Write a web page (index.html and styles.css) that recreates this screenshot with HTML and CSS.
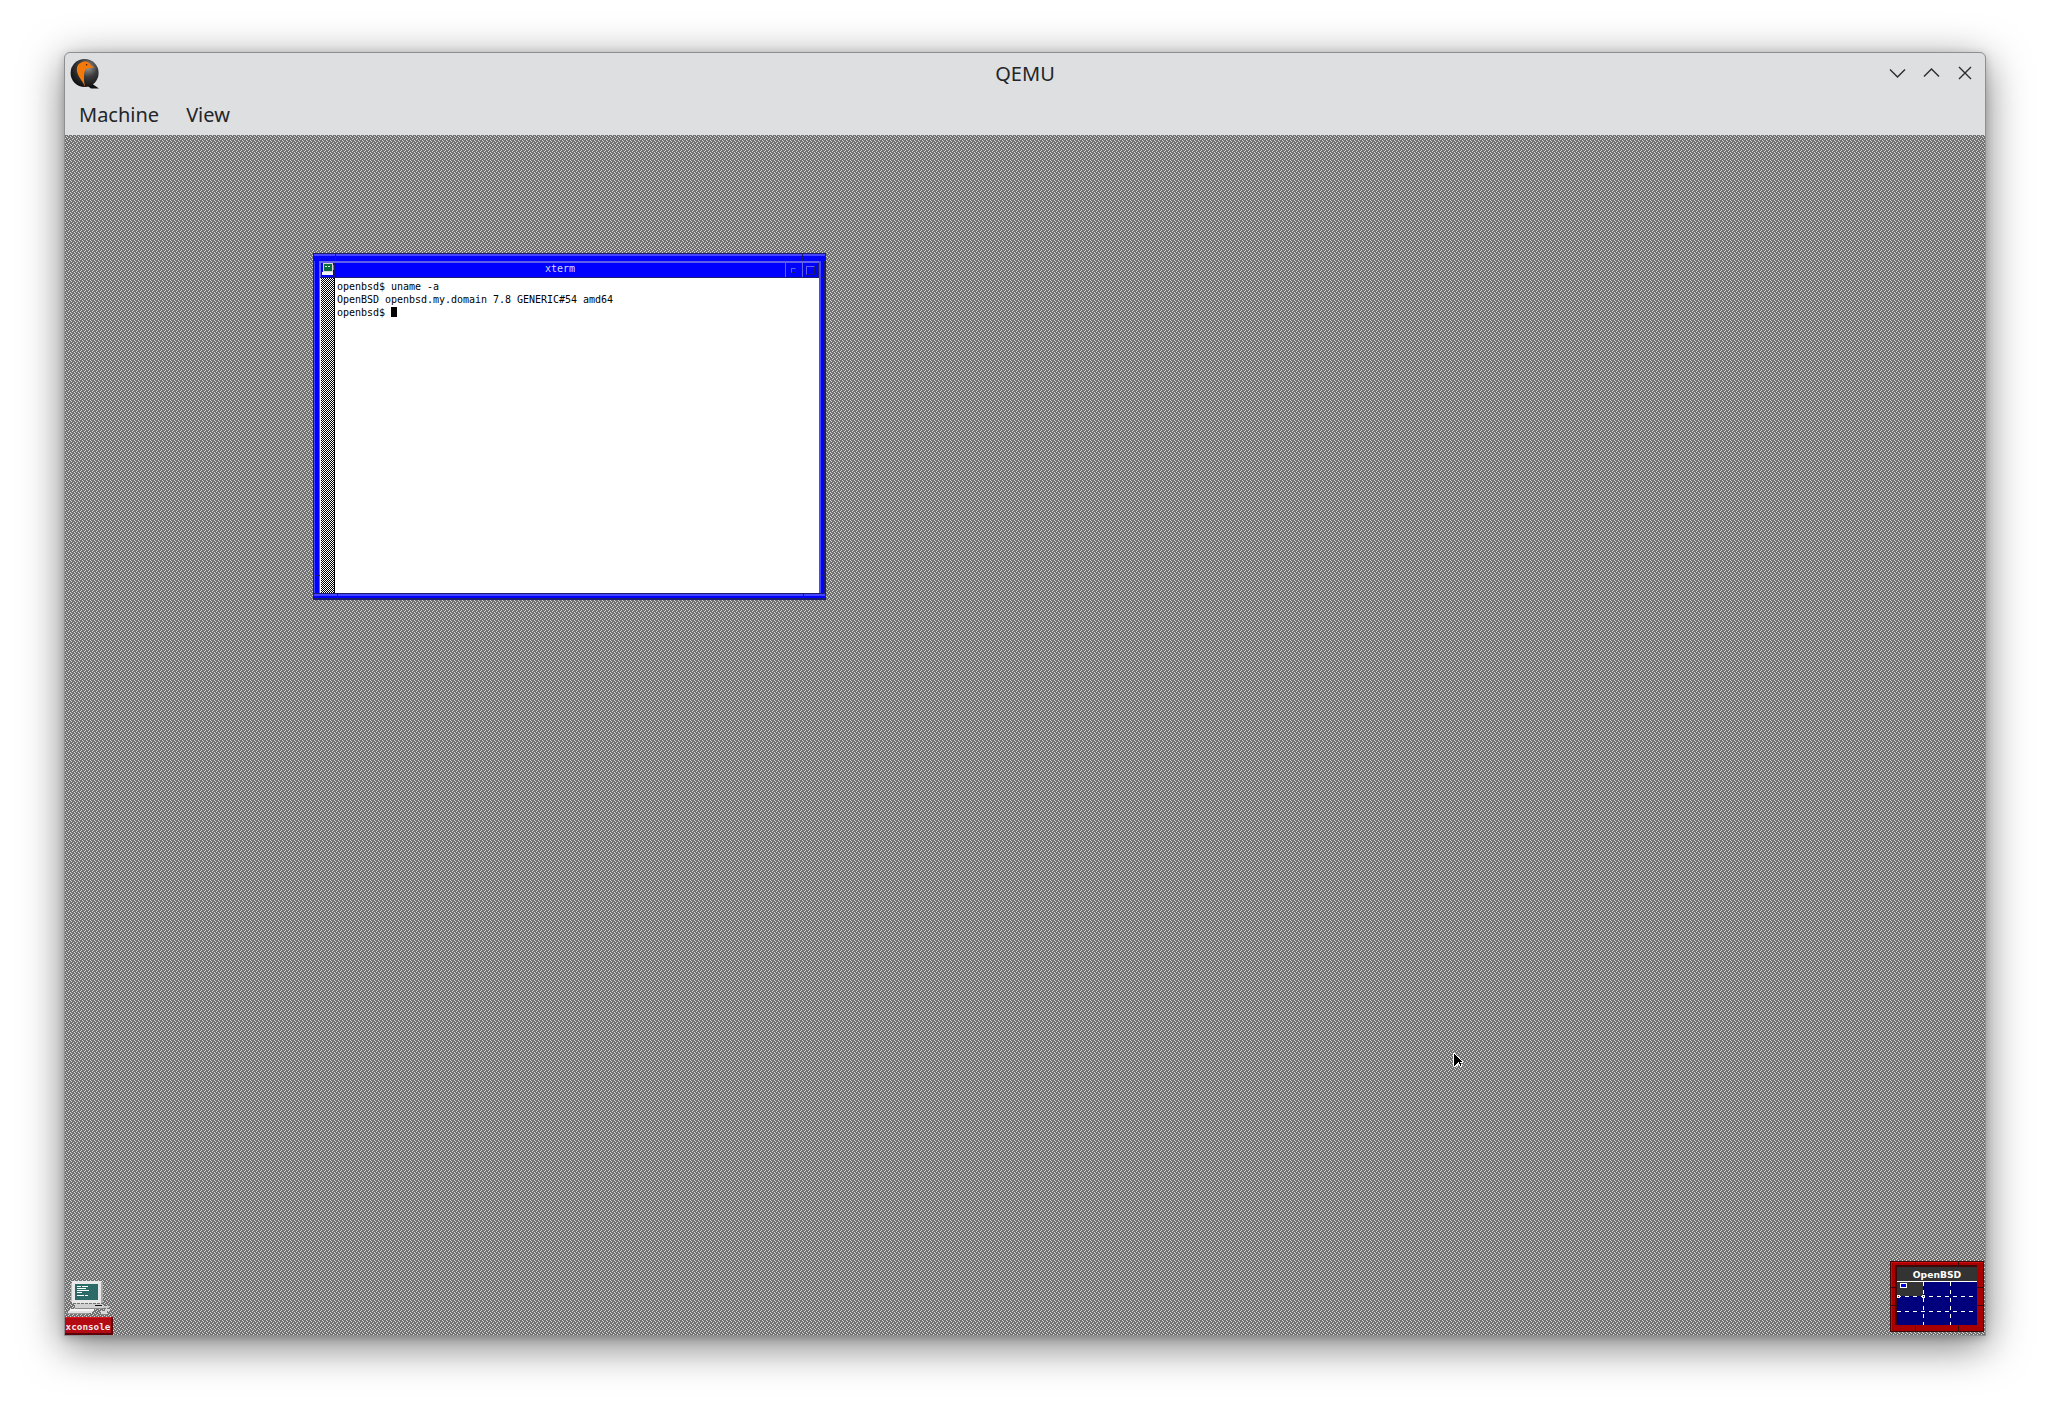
FILE: index.html
```html
<!DOCTYPE html>
<html lang="en">
<head>
<meta charset="utf-8">
<title>QEMU</title>
<link rel="stylesheet" href="styles.css">
</head>
<body>
<div class="host">
  <header class="titlebar">
    <div class="titlebar-left">
      <svg class="qemu-logo" width="30" height="31" viewBox="0 0 30 31">
        <defs>
          <radialGradient id="ball" cx="0.62" cy="0.3" r="0.75">
            <stop offset="0" stop-color="#9a9a9a"/>
            <stop offset="0.45" stop-color="#3c3c3c"/>
            <stop offset="1" stop-color="#0c0c0c"/>
          </radialGradient>
        </defs>
        <path d="M21 25l8 5.5h-8l-4-3z" fill="#111"/>
        <circle cx="14.6" cy="15" r="14" fill="url(#ball)"/>
        <path d="M7 9.5C8 5.5 12 3 16 3.5c2.6.3 4.4 2.2 5 4l3.5 2-5.5.6c-2.500.2-4 1.700-4.500 4-.6 3.400-.5 7-.4 9.500L15 29c-1-3-3.400-6.500-5.300-9.300C7.700 16.700 6.300 13 7 9.500z" fill="#f4790b"/>
        <circle cx="16.600" cy="6.800" r="0.8" fill="#3a1a00"/>
      </svg>
    </div>
    <div class="title">QEMU</div>
    <div class="controls">
      <span class="ctl"><svg width="17" height="10" viewBox="0 0 17 10"><path d="M1 1.500l7.500 7.500 7.500-7.500" class="ctl-stroke"/></svg></span>
      <span class="ctl"><svg width="17" height="10" viewBox="0 0 17 10"><path d="M1 8.500l7.500-7.500 7.500 7.500" class="ctl-stroke"/></svg></span>
      <span class="ctl"><svg width="14" height="14" viewBox="0 0 14 14"><path d="M1 1l12 12M13 1L1 13" class="ctl-stroke"/></svg></span>
    </div>
  </header>
  <nav class="menubar">
    <span class="menu-item">Machine</span>
    <span class="menu-item">View</span>
  </nav>
  <main class="display">
    <section class="xterm">
      <div class="frame-top">
        <i class="notch notch-v notch-tl"></i>
        <i class="notch notch-v notch-tr"></i>
      </div>
      <div class="frame-mid">
        <div class="frame-side frame-left"><i class="notch notch-h notch-lower"></i></div>
        <div class="inner">
          <div class="tbar">
            <div class="tbtn tbtn-menu">
              <svg class="mini-term" width="13" height="15" viewBox="0 0 13 15" shape-rendering="crispEdges">
                <rect x="1" y="2" width="10" height="9" fill="#d8d8d8"/>
                <rect x="2" y="3" width="8" height="7" fill="#0a6a3a"/>
                <rect x="3" y="5" width="2" height="1" fill="#d0f0d0"/>
                <rect x="6" y="5" width="2" height="1" fill="#d0f0d0"/>
                <rect x="11" y="4" width="1" height="5" fill="#777"/>
                <rect x="0" y="11" width="11" height="3" fill="#f2f2f2"/>
              </svg>
            </div>
            <div class="tname">xterm</div>
            <div class="tbtn tbtn-small"><b class="glyph glyph-min"></b></div>
            <div class="tbtn tbtn-small"><b class="glyph glyph-max"></b></div>
          </div>
          <div class="client">
            <div class="scrollbar"></div>
            <pre class="term">openbsd$ uname -a
OpenBSD openbsd.my.domain 7.8 GENERIC#54 amd64
openbsd$ <span class="cursor"></span></pre>
          </div>
        </div>
        <div class="frame-side frame-right"><i class="notch notch-h notch-top"></i><i class="notch notch-h notch-lower"></i></div>
      </div>
      <div class="frame-bottom">
        <i class="notch notch-v notch-bl"></i>
        <i class="notch notch-v notch-br"></i>
      </div>
    </section>

    <div class="xconsole">
      <svg class="xc-art" width="48" height="37" viewBox="0 0 48 37" shape-rendering="crispEdges">
        <rect x="7" y="1" width="30" height="22" fill="#e8e8e8"/>
        <rect x="6" y="3" width="1" height="18" fill="#bbb"/>
        <rect x="36" y="2" width="2" height="21" fill="#a8a8a8"/>
        <rect x="10" y="4" width="23" height="16" fill="#2c6a68"/>
        <rect x="12" y="6" width="4" height="1" fill="#fff"/><rect x="17" y="6" width="6" height="1" fill="#fff"/>
        <rect x="12" y="8" width="9" height="1" fill="#fff"/>
        <rect x="12" y="10" width="12" height="1" fill="#fff"/>
        <rect x="12" y="12" width="5" height="1" fill="#fff"/>
        <rect x="12" y="15" width="7" height="1" fill="#fff"/><rect x="20" y="15" width="3" height="1" fill="#fff"/>
        <rect x="10" y="24" width="28" height="5" fill="#d0d0d0"/>
        <rect x="10" y="28" width="28" height="1" fill="#8a8a8a"/>
        <rect x="30" y="25" width="7" height="1" fill="#111"/>
        <rect x="5" y="29" width="24" height="2" fill="#f4f4f4"/>
        <rect x="3" y="31" width="24" height="2" fill="#e0e0e0"/>
        <rect x="2" y="33" width="22" height="1" fill="#9a9a9a"/>
        <rect x="38" y="26" width="6" height="2" fill="#c8c8c8"/>
        <rect x="40" y="29" width="5" height="2" fill="#d8d8d8"/>
        <rect x="36" y="31" width="6" height="3" fill="#d8d8d8"/>
        <rect x="36" y="34" width="6" height="1" fill="#888"/>
      </svg>
      <div class="xc-label">xconsole</div>
    </div>

    <div class="pager">
      <i class="pn pn-t1"></i><i class="pn pn-t2"></i><i class="pn pn-b1"></i><i class="pn pn-b2"></i>
      <i class="pn pn-l1"></i><i class="pn pn-l2"></i><i class="pn pn-r1"></i><i class="pn pn-r2"></i>
      <div class="pager-inner">
        <div class="pager-title">OpenBSD</div>
        <div class="pager-desk">
          <svg class="pager-grid" width="80" height="43" viewBox="0 0 80 43" shape-rendering="crispEdges">
            <rect x="0" y="0" width="26" height="14" fill="#333"/>
            <rect x="3" y="1" width="7" height="5" fill="#fff"/>
            <rect x="4" y="2" width="5" height="3" fill="#0000e0"/>
            <path d="M0 14.500H80M0 29.500H80M26.500 0V43M53.500 0V43" stroke="#fff" stroke-dasharray="4 4" fill="none"/>
            <rect x="0" y="13" width="3" height="3" fill="#fff"/><rect x="1" y="14" width="1" height="1" fill="#b00000"/>
            <rect x="25" y="13" width="3" height="3" fill="#fff"/><rect x="26" y="14" width="1" height="1" fill="#b00000"/>
          </svg>
        </div>
      </div>
    </div>

    <svg class="pointer" width="12" height="16" viewBox="0 0 12 16" shape-rendering="crispEdges">
      <path d="M0 0h2v1h1v1h1v1h1v1h1v1h1v1h1v1h1v1h1v2H8v1h1v3H7v-1H6v-2H5v2H3v1H1v-1H0z" fill="#fff"/>
      <path d="M1 1h1v1h1v1h1v1h1v1h1v1h1v1h1v1h1v1H7v1h1v3H7v-2H6v-2H5v1H4v1H3v1H2v1H1z" fill="#000"/>
    </svg>
  </main>
</div>
</body>
</html>
```
FILE: styles.css
```css
html, body { margin: 0; padding: 0; }
body {
  width: 2050px;
  height: 1412px;
  background: #fff;
  overflow: hidden;
  font-family: "Noto Sans", sans-serif;
  color: #232629;
}
.host {
  margin: 52px 0 0 64px;
  width: 1920px;
  border: 1px solid #8e8f91;
  border-radius: 6px 6px 0 0;
  background: #dedfe1;
  box-shadow: 0 10px 42px rgba(0, 0, 0, .52), 0 2px 8px rgba(0, 0, 0, .2);
}
.titlebar {
  display: grid;
  grid-template-columns: 1fr auto 1fr;
  align-items: center;
  height: 41px;
}
.titlebar-left { display: flex; align-items: center; padding-left: 5px; }
.qemu-logo { display: block; }
.title { font-size: 20px; line-height: 41px; }
.controls { display: flex; justify-content: flex-end; padding-right: 3px; margin-top: -2px; }
.ctl { width: 34px; height: 41px; display: flex; align-items: center; justify-content: center; }
.ctl svg { display: block; }
.ctl-stroke { fill: none; stroke: #2a2c2f; stroke-width: 1.4; }
.menubar {
  display: flex;
  height: 41px;
  align-items: center;
  gap: 27px;
  padding-left: 14px;
  font-size: 20px;
}
.display {
  position: relative;
  height: 1200px;
  overflow: hidden;
  background-color: #727272;
  background-image: url("data:image/svg+xml,%3Csvg xmlns='http://www.w3.org/2000/svg' width='4' height='4' shape-rendering='crispEdges'%3E%3Crect width='4' height='4' fill='%23727272'/%3E%3Cg fill='%23d8d8d8'%3E%3Crect x='3' y='0' width='1' height='1'/%3E%3Crect x='1' y='1' width='1' height='1'/%3E%3Crect x='2' y='2' width='1' height='1'/%3E%3Crect x='0' y='3' width='1' height='1'/%3E%3C/g%3E%3C/svg%3E");
}

/* xterm window */
.xterm {
  position: absolute;
  left: 248px;
  top: 118px;
  width: 513px;
  height: 347px;
  box-sizing: border-box;
  display: flex;
  flex-direction: column;
  background: #0000ff;
  border: 1px solid #1b1b70;
}
.frame-top, .frame-bottom { position: relative; flex: none; box-sizing: border-box; }
.frame-top { height: 7px; border-top: 2px solid #4545ff; }
.frame-bottom {
  height: 6px;
  border-top: 1px solid #1b1b70;
  border-bottom: 1px solid #1b1b70;
  box-shadow: inset 0 2px 0 #4545ff;
}
.frame-mid { flex: 1; display: flex; min-height: 0; }
.frame-side { position: relative; flex: none; width: 6px; box-sizing: border-box; }
.frame-left { border-left: 1px solid #4545ff; border-right: 1px solid #6060e8; }
.frame-right { border-left: 2px solid #4545ff; border-right: 1px solid #1b1b70; }
.notch { position: absolute; background: #1b1b70; }
.notch-v { width: 1px; height: 7px; top: -2px; }
.notch-h { height: 1px; width: 5px; left: 0; }
.notch-tl { left: 21px; }
.notch-tr { left: 488px; }
.notch-bl { left: 23px; top: -1px; }
.notch-br { left: 489px; top: -1px; }
.notch-top { top: 16px; }
.notch-lower { top: 314px; }
.inner { flex: 1; min-width: 0; display: flex; flex-direction: column; }
.tbar {
  flex: none;
  display: flex;
  height: 17px;
  box-sizing: border-box;
  border-top: 2px solid #6060e8;
  border-bottom: 1px solid #1b1b70;
  background: #0000ff;
}
.tbtn {
  flex: none;
  display: flex;
  align-items: center;
  justify-content: center;
  box-sizing: border-box;
  border-left: 1px solid #6060e8;
  border-right: 1px solid #1b1b70;
}
.tbtn-menu { width: 15px; padding: 0 0 3px 2px; }
.tbtn-small { width: 17px; }
.mini-term { display: block; flex: none; }
.tname {
  flex: 1;
  text-align: center;
  font: 10px/12px "DejaVu Sans Mono", monospace;
  color: #d8dcff;
}
.glyph { display: block; box-sizing: border-box; background: #0000ff; }
.glyph-min { width: 5px; height: 5px; border: 1px solid #6060e8; border-right-color: #1b1b70; border-bottom-color: #1b1b70; }
.glyph-max { width: 9px; height: 9px; border: 1px solid #6060e8; border-right-color: #1b1b70; border-bottom-color: #1b1b70; }
.client { flex: 1; min-height: 0; display: flex; background: #fff; }
.scrollbar {
  flex: none;
  width: 15px;
  box-sizing: border-box;
  border-left: 1px solid #fff;
  border-right: 1px solid #000;
  background-image: url("data:image/svg+xml,%3Csvg xmlns='http://www.w3.org/2000/svg' width='2' height='2' shape-rendering='crispEdges'%3E%3Crect width='2' height='2' fill='%23fff'/%3E%3Crect width='1' height='1' fill='%23000'/%3E%3Crect x='1' y='1' width='1' height='1' fill='%23000'/%3E%3C/svg%3E");
}
.term {
  margin: 0;
  padding: 2px 0 0 2px;
  font: 10px/13px "DejaVu Sans Mono", monospace;
  letter-spacing: -0.02px;
  color: #000;
}
.cursor { display: inline-block; width: 6px; height: 10px; background: #000; vertical-align: -1px; }

/* xconsole icon */
.xconsole { position: absolute; left: 0; top: 1145px; width: 48px; }
.xc-art { display: block; }
.xc-label {
  box-sizing: border-box;
  height: 18px;
  background: #b40a14;
  border-top: 1px solid #e01820;
  border-right: 2px solid #5a0008;
  border-bottom: 2px solid #5a0008;
  color: #f0e8e8;
  font: bold 9.300px/17px "DejaVu Sans Mono", monospace;
  text-align: center;
  white-space: nowrap;
}

/* pager */
.pager {
  position: absolute;
  left: 1825px;
  top: 1126px;
  width: 94px;
  height: 71px;
  box-sizing: border-box;
  padding: 3px 6px 6px 4px;
  background: #a80000;
  border: 1px solid #3c0808;
  box-shadow: inset 1px 1px 0 #d00c0c;
}
.pn { position: absolute; background: #3c0808; }
.pn-t1, .pn-t2 { top: 0; width: 1px; height: 5px; }
.pn-b1, .pn-b2 { bottom: 0; width: 1px; height: 5px; }
.pn-t1, .pn-b1 { left: 24px; }
.pn-t2, .pn-b2 { left: 67px; }
.pn-l1, .pn-l2 { left: 0; width: 6px; height: 1px; }
.pn-r1, .pn-r2 { right: 0; width: 6px; height: 1px; }
.pn-l1, .pn-r1 { top: 25px; }
.pn-l2, .pn-r2 { top: 43px; }
.pager-inner {
  display: flex;
  flex-direction: column;
  height: 100%;
  border-top: 2px solid #3c0808;
  border-left: 2px solid #3c0808;
  box-sizing: border-box;
  background: #00007c;
}
.pager-title {
  flex: none;
  height: 15px;
  box-sizing: border-box;
  background: #333;
  border-bottom: 1px solid #fff;
  color: #fff;
  text-align: center;
  font: bold 9.200px/16px "DejaVu Sans", sans-serif;
}
.pager-desk { flex: 1; overflow: hidden; }
.pager-grid { display: block; }

.pointer { position: absolute; left: 1388px; top: 918px; display: block; }
```
